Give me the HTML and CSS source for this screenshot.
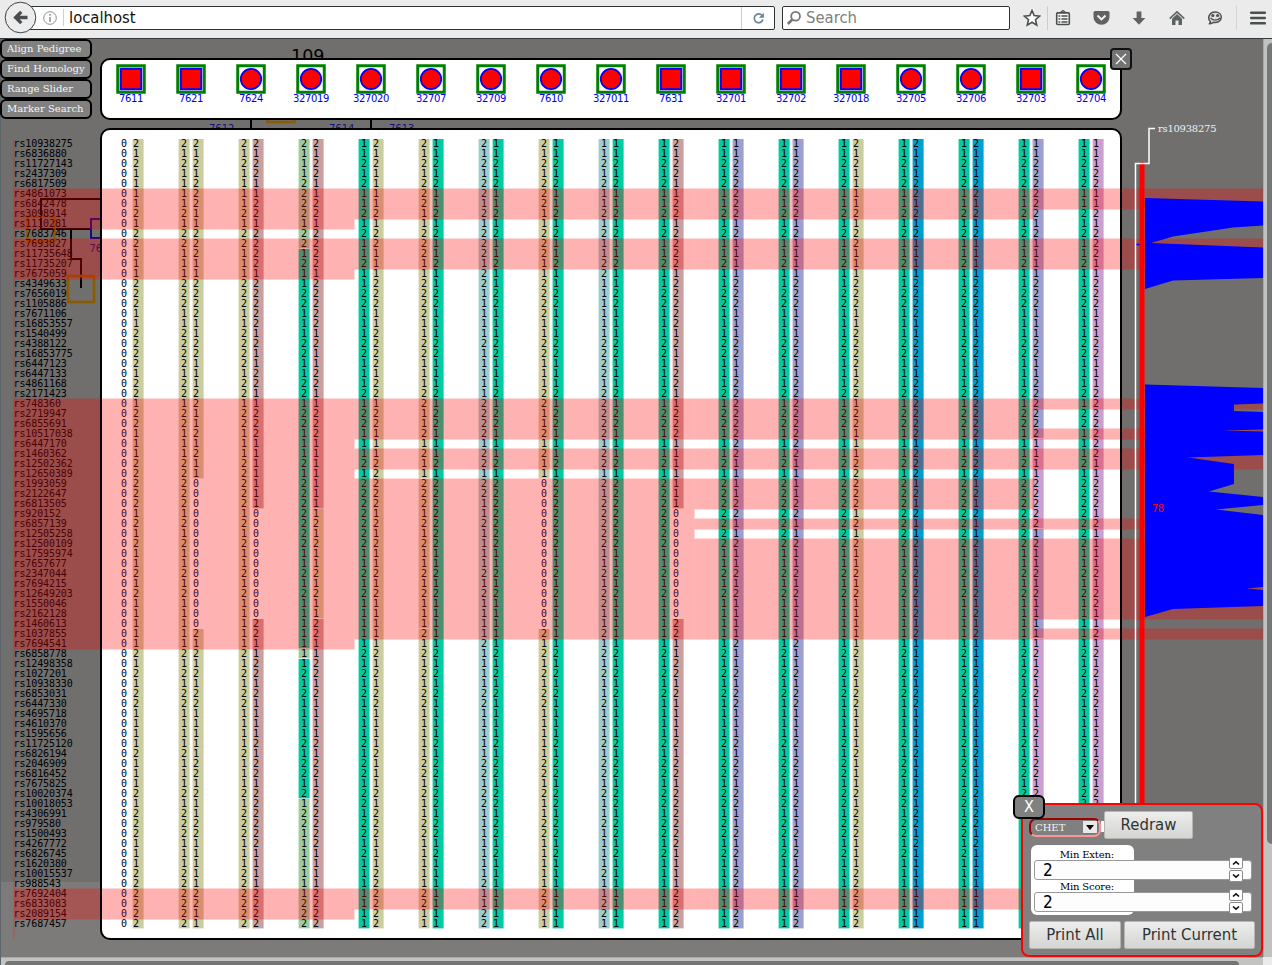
FILE: index.html
```html
<!DOCTYPE html>
<html lang="en">
<head>
<meta charset="utf-8">
<title>localhost</title>
<link rel="stylesheet" href="styles.css">
</head>
<body>
<header class="toolbar">
  <div class="urlbar">
    <svg class="info" width="14" height="14" viewBox="0 0 14 14"><circle cx="7" cy="7" r="6.3" fill="none" stroke="#8e8e8e"/><path d="M7 6v5M7 3v1.7" stroke="#8e8e8e" stroke-width="1.5"/></svg>
    <span class="url">localhost</span>
    <span class="reload"><svg width="13" height="13" viewBox="0 0 13 13"><path d="M9.8 3.2A4.4 4.4 0 1 0 10.9 7.6" fill="none" stroke="#6c8295" stroke-width="1.7"/><path d="M11.9 .8v5h-5z" fill="#6c8295"/></svg></span>
  </div>
  <svg class="back" width="33" height="33" viewBox="0 0 33 33"><circle cx="16.5" cy="16.5" r="15.3" fill="#ececec" stroke="#3b4144" stroke-width="1"/><path d="M23.500 16.500H11.500M17.300 10.800l-5.700 5.700 5.700 5.700" fill="none" stroke="#4a4d4f" stroke-width="3.300"/></svg>
  <div class="search"><svg width="16" height="16" viewBox="0 0 16 16"><circle cx="9.6" cy="6.2" r="4.4" fill="none" stroke="#777" stroke-width="1.8"/><path d="M6.3 9.5L1.8 14" stroke="#777" stroke-width="2.6"/></svg><span>Search</span></div>
  <div class="icons">
    <span class="ic star"><svg width="18" height="18" viewBox="0 0 18 18"><path d="M9 1.6l2.2 5 5.4.5-4.1 3.6 1.2 5.4L9 13.2l-4.7 2.9 1.2-5.4L1.4 7.1l5.4-.5z" fill="#fff" stroke="#4c4f50" stroke-width="1.6"/></svg></span>
    <span class="ic list"><svg width="16" height="16" viewBox="0 0 16 16"><path d="M5.5 2.5L8 .6l2.500 1.900" fill="none" stroke="#4c4f50" stroke-width="1.3"/><rect x="1.700" y="2.900" width="12.600" height="11.600" rx="1" fill="#f5f5f5" stroke="#4c4f50" stroke-width="1.600"/><path d="M3.500 6h1.800M6.500 6h6M3.500 9h1.800M6.500 9h6M3.500 12h1.800M6.500 12h6" stroke="#4c4f50" stroke-width="1.400"/></svg></span>
    <span class="ic"><svg width="17" height="16" viewBox="0 0 17 16"><path d="M2 1h13q1.500 0 1.500 1.500V7a8 7.800 0 0 1-16 0V2.500Q.5 1 2 1z" fill="#5f6263"/><path d="M4.500 5.500l4 3.900 4-3.900" fill="none" stroke="#f3f3f3" stroke-width="2"/></svg></span>
    <span class="ic"><svg width="16" height="16" viewBox="0 0 16 16"><path d="M5.600 1.500h4.800V8h4L8 14.800 1.600 8h4z" fill="#5f6263"/></svg></span>
    <span class="ic"><svg width="16" height="16" viewBox="0 0 16 16"><path d="M.7 8.700L8 1.800l7.300 6.900" fill="none" stroke="#5f6263" stroke-width="1.600"/><path d="M3 8.800L8 4l5 4.800V15H9.500v-4.500h-3V15H3z" fill="#5f6263"/></svg></span>
    <span class="ic"><svg width="16" height="16" viewBox="0 0 16 16"><path d="M1.800 13.700c1 0 1.600-.8 1.700-1.800C-.2 8.300 2.300 2 8.200 2c3.700 0 6.100 2.200 6.100 5.100 0 3.600-3.600 6-7.800 5.200-1.300 1.200-2.900 1.800-4.700 1.400z" fill="#ddd" stroke="#4c4f50" stroke-width="1.500"/><path d="M3.600 7.800c2 3.200 7.300 3.200 9.300 0" fill="none" stroke="#4c4f50" stroke-width="1.300"/><circle cx="5.800" cy="5.600" r="1.500" fill="#4c4f50"/><circle cx="10.600" cy="5.600" r="1.500" fill="#4c4f50"/></svg></span>
    <span class="ic menu"><svg width="16" height="14" viewBox="0 0 16 14"><path d="M1.200 1.700h13.600M1.200 7h13.600M1.200 12.300h13.600" stroke="#4c4f50" stroke-width="2.600" stroke-linecap="round"/></svg></span>
  </div>
</header>
<main class="stage">
  <svg id="canvas" class="canvas" width="1272" height="926" viewBox="0 39 1272 926"></svg>
  <nav class="side">
    <button>Align Pedigree</button>
    <button>Find Homology</button>
    <button>Range Slider</button>
    <button>Marker Search</button>
  </nav>
  <section id="people" class="people"></section>
  <button class="close" aria-label="Close"><svg width="12" height="12" viewBox="0 0 12 12"><path d="M1 1l10 10M11 1L1 11" stroke="#fff" stroke-width="1.200"/></svg></button>
  <section class="options">
    <button class="dismiss">X</button>
    <div class="row first"><span class="select">CHET<i><svg width="8" height="5" viewBox="0 0 8 5"><path d="M0 0h8L4 5z"/></svg></i></span><i class="chip"></i><button class="btn redraw">Redraw</button></div>
    <div class="fields">
      <label>Min Exten:</label>
      <div class="num"><span>2</span><div class="spin"><b><svg width="8" height="6" viewBox="0 0 8 6"><path d="M1 4.500L4 1.800 7 4.500" fill="none" stroke="#111" stroke-width="1.600"/></svg></b><b><svg width="8" height="6" viewBox="0 0 8 6"><path d="M1 1.500L4 4.200 7 1.500" fill="none" stroke="#111" stroke-width="1.600"/></svg></b></div></div>
      <label>Min Score:</label>
      <div class="num"><span>2</span><div class="spin"><b><svg width="8" height="6" viewBox="0 0 8 6"><path d="M1 4.500L4 1.800 7 4.500" fill="none" stroke="#111" stroke-width="1.600"/></svg></b><b><svg width="8" height="6" viewBox="0 0 8 6"><path d="M1 1.500L4 4.200 7 1.500" fill="none" stroke="#111" stroke-width="1.600"/></svg></b></div></div>
    </div>
    <div class="row last"><button class="btn all">Print All</button><button class="btn current">Print Current</button></div>
  </section>
  <div class="vscroll"><i></i></div>
  <div class="hscroll"><i></i></div>
  <div class="corner"></div>
</main>
<script src="app.js"></script>
</body>
</html>
```
FILE: styles.css
```css
* { box-sizing: border-box; }
body { margin: 0; width: 1272px; height: 965px; overflow: hidden; background: #706f6d; font-family: "DejaVu Sans", sans-serif; }
button { margin: 0; padding: 0; font: inherit; }
svg { display: block; }

.toolbar { position: relative; display: flex; align-items: flex-start; height: 39px; padding: 6px 0 0 21px; background: #ebebeb; border-bottom: 1px solid #33393c; }
.urlbar { display: flex; align-items: center; width: 754px; height: 24px; background: #fff; border: 1px solid #2e3436; border-radius: 2px; padding-left: 21px; }
.info { margin-right: 6px; }
.url { flex: 1; padding-left: 5px; border-left: 1px solid #cfcfcf; font: 16.500px/17px "DejaVu Sans Condensed", "DejaVu Sans", sans-serif; color: #111; }
.reload { display: flex; align-items: center; justify-content: center; width: 33px; height: 22px; border-left: 1px solid #ccc; }
.back { position: absolute; left: 4px; top: 1px; }
.search { display: flex; align-items: center; width: 228px; height: 24px; margin-left: 7px; padding-left: 3px; background: #fff; border: 1px solid #2e3436; border-radius: 2px; font: 16.500px/17px "DejaVu Sans Condensed", "DejaVu Sans", sans-serif; color: #808080; }
.search span { margin-left: 4px; }
.search svg, .url, .search span { position: relative; top: -0.5px; }
.icons { display: flex; margin-left: 6px; height: 24px; }
.ic { display: flex; align-items: center; justify-content: center; width: 38px; }
.star { width: 32px; border-right: 1px solid #ccc; }
.list { width: 30px; margin-right: 4px; }
.menu { width: 36px; margin-left: 2px; padding-left: 6px; border-left: 1px solid #d4d4d4; }

.stage { position: relative; height: 926px; }
.canvas { position: absolute; left: 0; top: 0; }
.mono { font: 10px "DejaVu Sans Mono", monospace; }
.sans { font: 10px "DejaVu Sans", sans-serif; }
.serif { font: 10px "DejaVu Serif", serif; }

.side { position: absolute; left: 0; top: 0; display: flex; flex-direction: column; width: 92px; }
.side button { height: 20px; border: 2px solid #000; border-radius: 6px; background: #808080; color: #f4f4f4; font: 10px/14px "DejaVu Serif", serif; text-align: left; padding-left: 5px; white-space: nowrap; }
.people { position: absolute; left: 100px; top: 19px; width: 1022px; height: 62px; display: flex; background: #fff; border: 2px solid #000; border-radius: 10px; padding-top: 4px; overflow: hidden; }
.person { width: 60px; flex: none; text-align: center; font: 10px/12px "DejaVu Sans", sans-serif; letter-spacing: -0.35px; color: #0000f0; }
.person:first-child { margin-left: -1px; }
.person svg { margin: 0 auto -1px; }
.close { position: absolute; left: 1110px; top: 9px; display: flex; align-items: center; justify-content: center; width: 22px; height: 22px; border: 2px solid #111; border-radius: 4px; background: #737373; }

.options { position: absolute; left: 1021px; top: 764px; width: 242px; height: 154px; border: 2px solid #f00; border-radius: 8px; background: #808080; padding: 6px 6px 0; }
.dismiss { position: absolute; left: -10px; top: -10px; width: 32px; height: 24px; border: 2px solid #000; border-radius: 6px; background: #808080; color: #fff; font: 16px/18px "DejaVu Sans Condensed", "DejaVu Sans", sans-serif; }
.row { display: flex; }
.first { align-items: flex-start; height: 34px; }
.select { display: flex; justify-content: space-between; align-items: center; width: 72px; height: 19px; margin-top: 7px; padding: 0 1px 0 4px; border: 2px solid; border-color: #a00000 #ff9494 #ff9494 #a00000; border-radius: 7px; color: #f4f4f4; font: 10px/12px "DejaVu Serif", serif; }
.select i { display: flex; align-items: center; justify-content: center; width: 15px; height: 13px; background: #e8e8e8; border-right: 1px solid #777; border-bottom: 1px solid #777; }
.chip { width: 3px; height: 11px; margin-top: 10px; background: #fff; }
.btn { height: 28px; border: 1px solid #b5b5b2; border-radius: 2px; background: linear-gradient(#ededec, #d4d4d2); color: #2e3436; font: 16.600px/24px "DejaVu Sans Condensed", "DejaVu Sans", sans-serif; white-space: nowrap; }
.redraw { width: 89px; }
.fields { width: 103px; height: 70px; margin-left: 2px; padding: 3px; background: #fff; border-radius: 6px; }
.fields label { display: block; height: 12px; padding-right: 17px; text-align: right; font: 10px/14px "DejaVu Serif", serif; letter-spacing: -0.15px; white-space: nowrap; color: #000; }
.num { position: relative; display: flex; align-items: center; width: 218px; height: 20px; border: 1px solid #999; border-radius: 3px; background: #fdfdfd; font: 17px/16px "DejaVu Sans Condensed", "DejaVu Sans", sans-serif; padding-left: 8px; }
.spin { position: absolute; right: 8px; top: -4px; width: 14px; display: flex; flex-direction: column; gap: 1px; }
.spin b { display: flex; align-items: center; justify-content: center; height: 12px; border: 1px solid #8c8c8c; border-radius: 2px; background: #fff; }
.last { margin-top: 6px; gap: 3px; }
.all { width: 92px; }
.current { width: 131px; }

.vscroll { position: absolute; left: 1263px; top: 0; width: 9px; height: 918px; background: #c0c2c0; border-left: 1px solid #a9aaa8; padding: 4px 0 0 3px; overflow: hidden; }
.vscroll i { display: block; width: 12px; height: 801px; border-radius: 5px; background: #767877; }
.hscroll { position: absolute; left: 1px; top: 918px; width: 1262px; height: 8px; background: #c3c4c2; border-top: 1px solid #a9aaa8; padding: 3px 0 0 4px; overflow: hidden; }
.hscroll i { display: block; width: 1234px; height: 9px; border-radius: 4px; background: #737473; }
.corner { position: absolute; right: 0; bottom: 0; width: 9px; height: 8px; background: #ebebeb; }
```
FILE: app.js
```js
const markers = ("10938275 6836880 11727143 2437309 6817509 4861073 6842478 3098914 1110281 7683746 7693827 11735648 11735207 7675059 4349633 7656019 1105886 7671106 16853557 1540499 4388122 16853775 6447123 6447133 4861168 2171423 748360 2719947 6855691 10517038 6447170 1460362 12502362 12650389 1993059 2122647 6813505 920152 6857139 12505258 12500109 17595974 7657677 2347044 7694215 12649203 1550046 2162128 1460613 1037855 7694541 6858778 12498358 1027201 10938330 6853031 6447330 4695718 4610370 1595656 11725120 6826194 2046909 6816452 7675825 10020374 10018053 4306991 979580 1500493 4267772 6826745 1620380 10015537 988543 7692404 6833083 2089154 7687457").split(" ");

// Haplotypes, one allele per marker
const H = {
  Z: "0".repeat(79),
  A: "21211112122111222112222122" + "122111222221212112121111121" + "21221111211121222111222222",
  B: "21212221122211222211221112" + "21121211" + "0".repeat(15) + "2121" + "21221111122121122111112211",
  F: "21212221122211222211221112" + "211212112221212112121112121" + "21221111122121122111112211",
  C: "21221122122221222221211221" + "12221111111" + "0".repeat(11) + "22112" + "21211112122122222211112222",
  E: "21221122122221222221211221" + "122211111111212112121122112" + "21211112122122222211112222",
  D: "21112222122121122111221122" + "122111212222222112121111111" + "21211112122121221111111222",
  G: "11212112121121122111221112" + "122111212222222112121111121" + "21211112122122122121111111",
  I: "21212212122212211111211111" + "222212212211211112121111211" + "11221111122122111111121122",
  K: "11212112121122111111222212" + "222212212122222112122112121" + "21121112122121121111211221",
  L: "11222222121111222111221122" + "222222111122112112121111211" + "21221112122122112121221122",
  M: "21112212121111222211221122" + "222212221212112112121212111" + "21221111211121221211111111",
  Q: "11222222121111222111221122" + "222211112222212112121111121" + "21211121122122112121221122",
  P: "11122112122211222111221112" + "222222112221211112122112121" + "21221112122122112121221122"
};
const KH = "#cccc9f", GR = "#00cc9f", RO = "#cc9f9f", LG = "#9fcc9f", LT = "#9fcccc", LV = "#9f9fcc", BL = "#009fcc", PK = "#cc9fcc";
const whole = c => [[0, 78, c]];

// id, shape, left haplotype, left colours, right haplotype, right colours
const people = [
  ["7611", "s", "Z", [], "A", whole(KH)],
  ["7621", "s", "A", whole(KH), "B", [[0, 33, KH], [49, 78, KH]]],
  ["7624", "c", "A", whole(KH), "C", [[0, 36, RO], [48, 78, RO]]],
  ["327019", "c", "D", [[0, 10, LG], [11, 50, GR], [51, 51, LG], [52, 65, GR], [66, 78, LG]], "E", [[0, 36, RO], [37, 47, KH], [48, 78, RO]]],
  ["327020", "c", "G", whole(GR), "A", whole(KH)],
  ["32707", "c", "F", [[0, 33, KH], [34, 48, KH], [49, 78, KH]], "G", whole(GR)],
  ["32709", "c", "I", whole(LT), "G", whole(GR)],
  ["7610", "c", "B", [[0, 33, KH], [49, 78, KH]], "G", whole(GR)],
  ["327011", "c", "K", whole(LT), "G", whole(GR)],
  ["7631", "s", "G", whole(GR), "C", [[0, 36, RO], [48, 78, RO]]],
  ["32701", "s", "G", whole(GR), "L", whole(LV)],
  ["32702", "s", "G", whole(GR), "L", whole(LV)],
  ["327018", "s", "G", whole(GR), "A", whole(KH)],
  ["32705", "c", "G", whole(GR), "M", whole(BL)],
  ["32706", "c", "G", whole(GR), "M", whole(BL)],
  ["32703", "s", "G", whole(GR), "Q", [[0, 29, LV], [30, 38, PK], [39, 49, LV], [50, 78, PK]]],
  ["32704", "c", "G", whole(GR), "P", whole(PK)]
];

document.getElementById("people").innerHTML = people.map(([id, shape]) => {
  const mark = shape === "s"
    ? '<rect x="4.750" y="4.750" width="20.500" height="20.500" fill="red" stroke="blue" stroke-width="2"/>'
    : '<circle cx="15" cy="15" r="10.200" fill="red" stroke="blue" stroke-width="1.800"/>';
  return `<div class="person"><svg width="30" height="30"><rect x="1.750" y="1.750" width="26.500" height="26.500" fill="#fff" stroke="green" stroke-width="3"/>${mark}</svg>${id}</div>`;
}).join("");

let s = '<rect y="39" width="1272" height="926" fill="#706f6d"/><rect y="882" width="1272" height="83" fill="#7c7b79"/><path d="M.5 39v926" stroke="#5d656c"/>';

// Dimmed pedigree behind the panels
s += `<text x="291" y="62" style="font:17.500px 'DejaVu Sans',sans-serif">109</text>
<g fill="#101080" class="sans"><text x="209" y="132">7612</text><text x="329" y="132">7614</text><text x="389" y="132">7613</text><text x="89.500" y="251.500">76</text></g>
<path d="M251 118v12M371 118v12M100 199H41v30h50M71 229v30h10v29" fill="none" stroke="#000" stroke-width="2"/>
<g fill="none" stroke="#8c5a00" stroke-width="2.600"><rect x="267.500" y="95" width="27" height="27"/><rect x="27.500" y="216.500" width="27" height="25"/><rect x="68" y="276" width="26" height="26"/></g>
<rect x="91" y="219" width="20" height="19" fill="none" stroke="#120a88" stroke-width="2"/>`;

s += '<rect x="101" y="129" width="1020" height="810" rx="9" fill="#fff"/>';

people.forEach(([, , , lc, , rc], i) => {
  const cx = 131 + 60 * i;
  [[lc, cx - 12.4], [rc, cx + 1.6]].forEach(([segs, x]) => segs.forEach(([a, b, c]) => {
    s += `<rect x="${x}" y="${139 + 10 * a}" width="11" height="${(b - a) * 10 + 9.4}" fill="${c}"/>`;
  }));
});
s += '<g class="mono">';
markers.forEach((m, r) => {
  const y = 147 + 10 * r;
  s += `<text x="13.500" y="${y}" textLength="${(m.length + 2) * 5.93}">rs${m}</text>`;
  const xs = people.map((_, i) => `${121 + 60 * i} ${133 + 60 * i}`).join(" ");
  s += `<text x="${xs}" y="${y}">${people.map(p => H[p[2]][r] + H[p[4]][r]).join("")}</text>`;
});
s += "</g>";

// Homology bands: x range and the runs of markers they cover
const bands = [
  [14, 354.5, [[5, 8], [10, 13], [26, 50], [75, 77]]],
  [354.5, 694.5, [[5, 7], [10, 12], [26, 29], [31, 32], [34, 49], [75, 76]]],
  [694.5, 1034, [[5, 7], [10, 12], [26, 29], [31, 32], [34, 36], [38, 38], [40, 49], [75, 76]]],
  [1034, 1263, [[5, 6], [10, 12], [26, 26], [29, 29], [31, 32], [38, 38], [40, 47], [49, 49], [75, 76]]]
];
s += '<g fill="red" fill-opacity=".3"><rect x="13.500" y="139" width="1" height="800"/>';
bands.forEach(([x0, x1, runs]) => runs.forEach(([a, b]) => {
  s += `<rect x="${x0}" y="${138.5 + 10 * a}" width="${x1 - x0}" height="${(b - a + 1) * 10 + 1}"/>`;
}));
s += "</g>";

s += `<rect x="101" y="129" width="1020" height="810" rx="9" fill="none" stroke="#000" stroke-width="2"/>
<g fill="blue"><path d="M1145 198L1263 201.500V225.500L1233 227.500 1173 236.500 1151 243 1263 247.500V278L1173 280.500 1145 289z"/>
<path d="M1145 384.500L1263 388V403.500L1234 404.500V411L1263 412V429.500L1222 430.500 1263 431.500V455L1188 457.500 1234 464V484L1209 491.500 1263 497V505L1216 509.500 1263 515V587L1247 588.500 1263 590V606L1173 609 1145 617z"/></g>
<path d="M1136 244.500h4" stroke="blue" stroke-width="1.500"/>
<path d="M1142 164.500V810" stroke="red" stroke-width="5" stroke-linecap="round"/>
<path d="M1155 128.500h-6v35h-13.500V810" fill="none" stroke="#fff" stroke-width="1.500"/>
<text x="1158" y="132" class="serif" fill="#f0f0f0" textLength="58.500">rs10938275</text>
<text x="1152" y="512" class="sans" fill="red" textLength="12">78</text>`;
document.getElementById("canvas").innerHTML = s;
```
